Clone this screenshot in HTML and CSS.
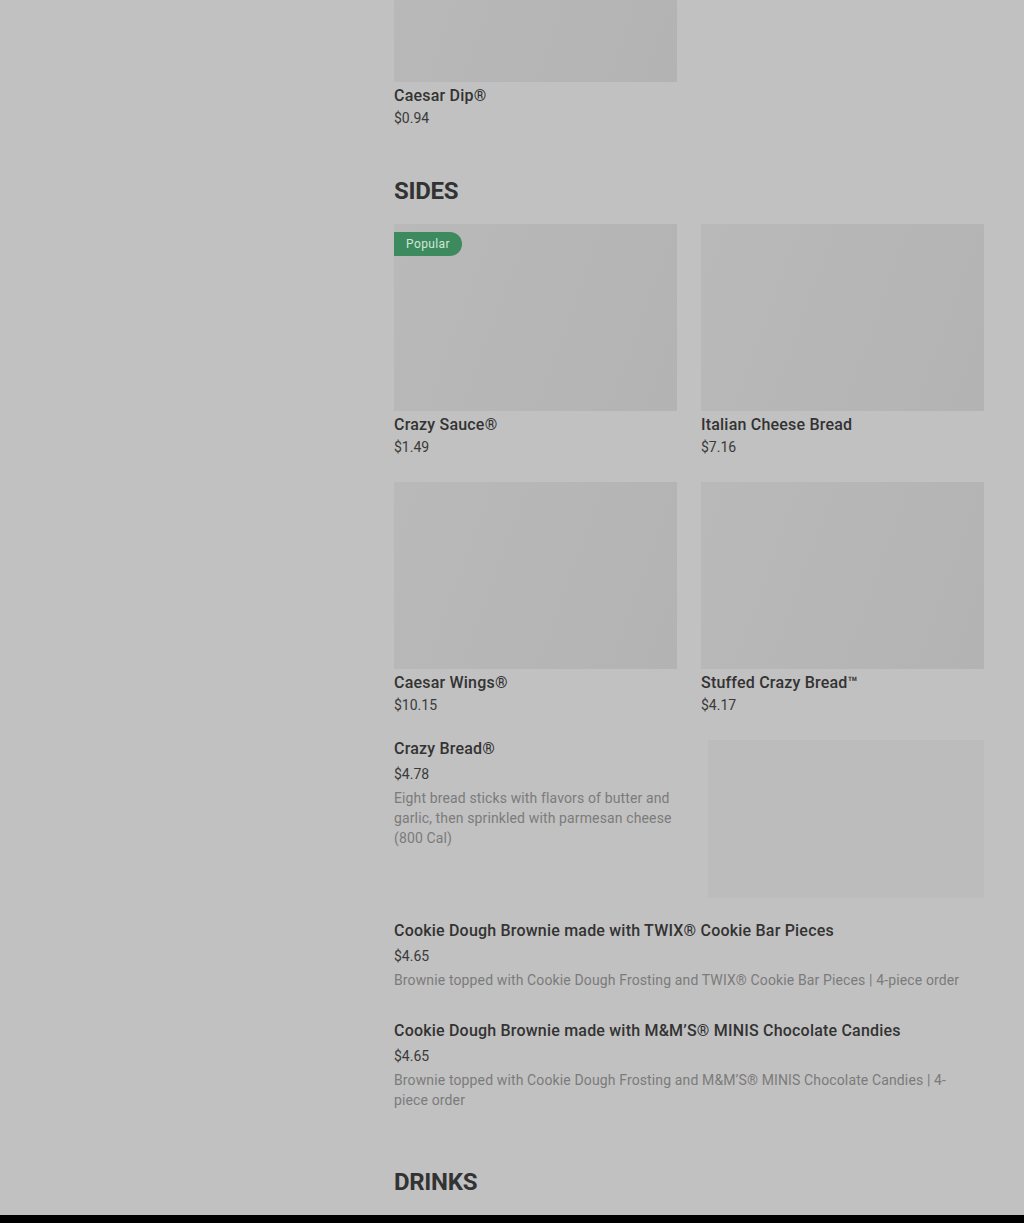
FILE: index.html
```html
<!DOCTYPE html>
<html lang="en">
<head>
    <meta charset="UTF-8">
    <meta name="viewport" content="width=device-width, initial-scale=1.0">
    <title>Menu</title>
    <link rel="stylesheet" href="styles.css">
</head>
<body>

    <div class="page">
        <aside class="sidebar"></aside>

        <main class="menu">

            <section class="section section-first">
                <div class="card-grid">
                    <div class="card card-cut">
                        <div class="card-img"></div>
                        <div class="card-title">Caesar Dip®</div>
                        <div class="card-price">$0.94</div>
                    </div>
                </div>
            </section>

            <section class="section">
                <h2 class="section-title">SIDES</h2>

                <div class="card-grid">
                    <div class="card">
                        <div class="card-img">
                            <span class="badge">Popular</span>
                        </div>
                        <div class="card-title">Crazy Sauce®</div>
                        <div class="card-price">$1.49</div>
                    </div>
                    <div class="card">
                        <div class="card-img"></div>
                        <div class="card-title">Italian Cheese Bread</div>
                        <div class="card-price">$7.16</div>
                    </div>
                    <div class="card">
                        <div class="card-img"></div>
                        <div class="card-title">Caesar Wings®</div>
                        <div class="card-price">$10.15</div>
                    </div>
                    <div class="card">
                        <div class="card-img"></div>
                        <div class="card-title">Stuffed Crazy Bread™</div>
                        <div class="card-price">$4.17</div>
                    </div>
                </div>

                <div class="list">
                    <div class="row">
                        <div class="row-text">
                            <div class="row-title">Crazy Bread®</div>
                            <div class="row-price">$4.78</div>
                            <div class="row-desc">Eight bread sticks with flavors of butter and garlic, then sprinkled with parmesan cheese (800 Cal)</div>
                        </div>
                        <div class="row-img"></div>
                    </div>
                    <div class="row row-plain">
                        <div class="row-text">
                            <div class="row-title">Cookie Dough Brownie made with TWIX® Cookie Bar Pieces</div>
                            <div class="row-price">$4.65</div>
                            <div class="row-desc">Brownie topped with Cookie Dough Frosting and TWIX® Cookie Bar Pieces | 4-piece order</div>
                        </div>
                    </div>
                    <div class="row row-plain">
                        <div class="row-text">
                            <div class="row-title">Cookie Dough Brownie made with M&amp;M’S® MINIS Chocolate Candies</div>
                            <div class="row-price">$4.65</div>
                            <div class="row-desc">Brownie topped with Cookie Dough Frosting and M&amp;M’S® MINIS Chocolate Candies | 4-piece order</div>
                        </div>
                    </div>
                </div>
            </section>

            <section class="section">
                <h2 class="section-title">DRINKS</h2>
                <div class="card-grid">
                    <div class="card">
                        <div class="card-img"></div>
                    </div>
                    <div class="card">
                        <div class="card-img"></div>
                    </div>
                </div>
            </section>

        </main>
    </div>

    <div class="sheet-edge"></div>

</body>
</html>
```

FILE: styles.css
```css
body {
    background-color: #c1c1c1;
    font-family: Roboto, "Liberation Sans", sans-serif;
    color: #2f2f2f;
    margin: 0;
    height: 100vh;
    overflow: hidden;
}

.page {
    display: grid;
    grid-template-columns: 314px 590px;
    gap: 40px;
    padding: 0 40px;
}

.menu {
    margin-top: -105px;
}

.section-title {
    font-size: 24px;
    line-height: 32px;
    font-weight: 700;
    color: #333;
    margin: 47px 0 17px;
    letter-spacing: -0.3px;
}

.card-grid {
    display: grid;
    grid-template-columns: 1fr 1fr;
    column-gap: 24px;
    row-gap: 25px;
}

.card-img {
    position: relative;
    height: 187px;
    background: linear-gradient(110deg, #b9b9b9, #b3b3b3);
}

.badge {
    position: absolute;
    top: 8px;
    left: 0;
    height: 24px;
    line-height: 24px;
    padding: 0 12px;
    font-size: 12px;
    letter-spacing: 0.4px;
    color: #d3e6da;
    background-color: #3d8a5f;
    border-radius: 0 12px 12px 0;
}

.card-title, .row-title {
    font-size: 16px;
    line-height: 24px;
    font-weight: 500;
    letter-spacing: 0.2px;
    color: #333;
}

.card-title {
    margin-top: 2px;
}

.card-price, .row-price {
    font-size: 14px;
    line-height: 20px;
    color: #3a3a3a;
}

.list {
    margin-top: 22px;
}

.row {
    display: grid;
    grid-template-columns: 1fr 276px;
    min-height: 100px;
}

.row-plain {
    grid-template-columns: 1fr;
}

.row-text {
    padding-right: 24px;
}

.row-price {
    margin-top: 3px;
}

.row-desc {
    margin-top: 4px;
    font-size: 14px;
    line-height: 20px;
    letter-spacing: 0.13px;
    color: #7b7b7b;
}

.row-img {
    height: 158px;
    margin: 3px 0 21px;
    background-color: #bcbcbc;
}

.sheet-edge {
    position: fixed;
    left: 0;
    right: 0;
    bottom: 0;
    height: 8px;
    background-color: #000;
}
```
